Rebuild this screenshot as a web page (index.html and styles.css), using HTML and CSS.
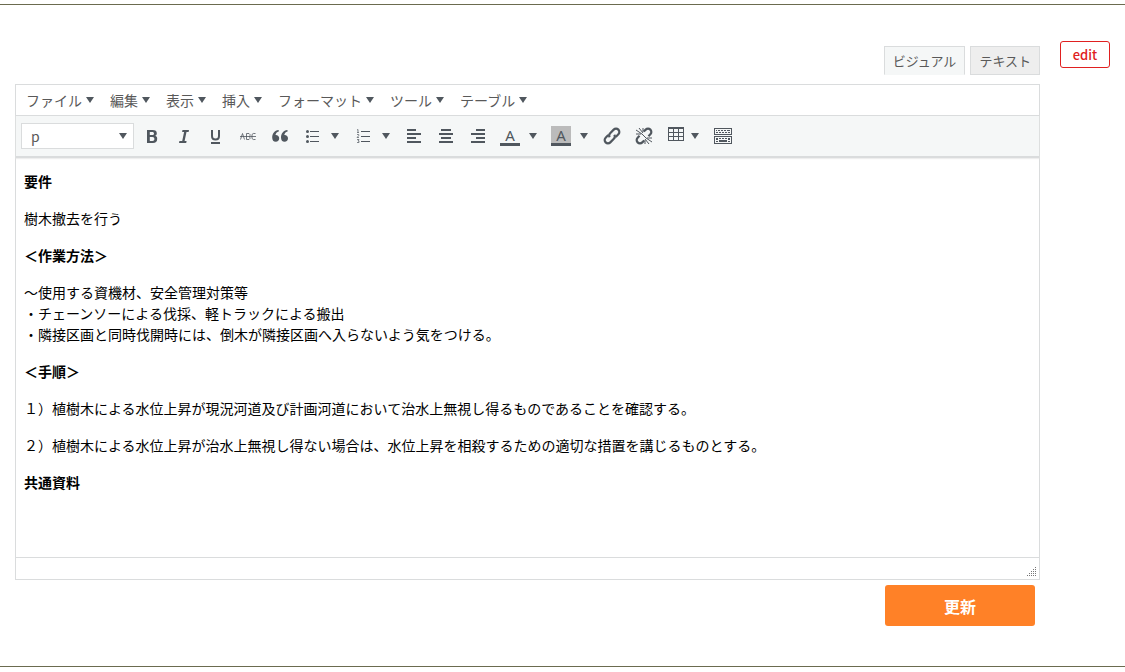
FILE: index.html
```html
<!DOCTYPE html>
<html lang="ja">
<head>
<meta charset="utf-8">
<meta name="viewport" content="width=device-width, initial-scale=1">
<title>エディター</title>
<link rel="stylesheet" href="styles.css">
</head>
<body>
<svg class="sprite" aria-hidden="true">
  <symbol id="caret" viewBox="0 0 8 6"><path d="M0 0h8L4 6z"/></symbol>
</svg>
<main class="section">
  <form class="editor-column">
    <div class="tabs">
      <button type="button" class="tab tab-active">ビジュアル</button>
      <button type="button" class="tab">テキスト</button>
    </div>
    <div class="editor">
      <div class="menubar">
        <button type="button" class="menu">ファイル<svg class="caret"><use href="#caret"/></svg></button>
        <button type="button" class="menu">編集<svg class="caret"><use href="#caret"/></svg></button>
        <button type="button" class="menu">表示<svg class="caret"><use href="#caret"/></svg></button>
        <button type="button" class="menu">挿入<svg class="caret"><use href="#caret"/></svg></button>
        <button type="button" class="menu">フォーマット<svg class="caret"><use href="#caret"/></svg></button>
        <button type="button" class="menu">ツール<svg class="caret"><use href="#caret"/></svg></button>
        <button type="button" class="menu">テーブル<svg class="caret"><use href="#caret"/></svg></button>
      </div>
      <div class="toolbar">
        <div class="format">
          <select class="format-select" aria-label="フォーマット"><option>p</option></select>
          <svg class="caret format-caret"><use href="#caret"/></svg>
        </div>
        <button type="button" class="tool" aria-label="太字"><svg class="icon" viewBox="0 0 20 20"><path fill-rule="evenodd" d="M5 4h5.500c3 0 4.300 1.200 4.300 3.200 0 1.300-.6 2.200-1.700 2.600 1.400.4 2.100 1.400 2.100 2.900C15.200 15.700 13.600 17 11 17H5zm2.800 2v3H10c1.300 0 2-.5 2-1.500S11.300 6 10 6zm0 5v4h2.600c1.300 0 2-.8 2-2s-.7-2-2-2z"/></svg></button>
        <button type="button" class="tool" aria-label="斜体"><svg class="icon" viewBox="0 0 20 20"><path d="M8.500 4H15l-.4 2h-2.100l-1.900 9h2l-.4 2H5l.4-2h2.800l1.900-9H8.100z"/></svg></button>
        <button type="button" class="tool" aria-label="下線"><svg class="icon" viewBox="0 0 20 20"><path class="line" stroke-width="2" d="M6 4v6c0 2.500 1 3.500 3.500 3.500S13 12.500 13 10V4"/><path d="M5 16h9v2H5z"/></svg></button>
        <button type="button" class="tool" aria-label="打ち消し線"><svg class="icon" viewBox="0 0 20 20"><path class="line" stroke-width="0.8" d="M2.500 13.500l2-6 2 6M8.500 7.500v6H11l1-1v-1.200l-1-.8 1-1V8.500l-1-1zM17.500 7.500h-2.200l-1.300 1v4l1.300 1h2.200M2 10.500h16"/></svg></button>
        <button type="button" class="tool" aria-label="引用"><svg class="icon" viewBox="0 0 20 20"><path d="M9 5.200C6.700 6 5.700 7.400 5.500 9c2-.2 3.700 1.100 3.700 3.200 0 2-1.400 3.600-3.400 3.600-2.300 0-3.600-1.700-3.600-4.400C2.200 7.700 4.600 4.500 8.500 4zM17.800 5.200c-2.300.8-3.300 2.200-3.500 3.800 2-.2 3.700 1.100 3.700 3.200 0 2-1.400 3.600-3.400 3.600-2.300 0-3.600-1.700-3.600-4.400 0-3.700 2.400-6.900 6.300-7.400z"/></svg></button>
        <button type="button" class="tool split" aria-label="箇条書き"><svg class="icon" viewBox="0 0 20 20"><circle cx="5.500" cy="5.500" r="1.500"/><circle cx="5.500" cy="10.500" r="1.500"/><circle cx="5.500" cy="15.500" r="1.500"/><path d="M8 5h9v1H8zM8 10h9v1H8zM8 15h9v1H8z"/></svg><svg class="caret"><use href="#caret"/></svg></button>
        <button type="button" class="tool split" aria-label="番号付きリスト"><svg class="icon" viewBox="0 0 20 20"><path d="M8 5h9v1H8zM8 10h9v1H8zM8 15h9v1H8z"/><path class="line thin" d="M4 4l1-.5v3M4 6.500h2M4 8.500h1.700v1.200L4 11.500h2M4 13.500h2l-1 1.400h1v1.600H4"/></svg><svg class="caret"><use href="#caret"/></svg></button>
        <button type="button" class="tool" aria-label="左揃え"><svg class="icon" viewBox="0 0 20 20"><path d="M3 3h9v2H3zM3 7h14v2H3zM3 11h9v2H3zM3 15h14v2H3z"/></svg></button>
        <button type="button" class="tool" aria-label="中央揃え"><svg class="icon" viewBox="0 0 20 20"><path d="M5 3h10v2H5zM3 7h14v2H3zM5 11h10v2H5zM3 15h14v2H3z"/></svg></button>
        <button type="button" class="tool" aria-label="右揃え"><svg class="icon" viewBox="0 0 20 20"><path d="M8 3h9v2H8zM3 7h14v2H3zM8 11h9v2H8zM3 15h14v2H3z"/></svg></button>
        <button type="button" class="tool split" aria-label="文字色"><span class="letter">A</span><svg class="caret"><use href="#caret"/></svg></button>
        <button type="button" class="tool split" aria-label="背景色"><span class="letter letter-filled">A</span><svg class="caret"><use href="#caret"/></svg></button>
        <button type="button" class="tool" aria-label="リンク"><svg class="icon" viewBox="0 0 20 20"><g class="line" stroke-width="2.200" transform="rotate(-45 10 10)"><path d="M8 6.700H4.300a3.300 3.300 0 0 0 0 6.600h5a3.300 3.300 0 0 0 3.200-2.500"/><path d="M12 13.300h3.700a3.300 3.300 0 0 0 0-6.600h-5a3.300 3.300 0 0 0-3.200 2.500"/></g></svg></button>
        <button type="button" class="tool" aria-label="リンク解除"><svg class="icon" viewBox="0 0 20 20"><g class="line" stroke-width="2.200" transform="rotate(-45 10 10)"><path d="M7 6.700H4.300a3.300 3.300 0 0 0 0 6.600H7M13 13.300h2.700a3.300 3.300 0 0 0 0-6.600H13"/></g><path class="line" d="M2 4l6 4M5 2l4 5M9 2v4M2 8h5M18 16l-6-4M15 18l-4-5M11 18v-4M18 12h-5M8 8l4 4"/></svg></button>
        <button type="button" class="tool split split-narrow" aria-label="表"><svg class="icon" viewBox="0 0 20 20"><path fill-rule="evenodd" d="M2 1h16v14H2zm1 2v3h4V3zm5 0v3h4V3zm5 0v3h4V3zM3 7v3h4V7zm5 0v3h4V7zm5 0v3h4V7zM3 11v3h4v-3zm5 0v3h4v-3zm5 0v3h4v-3z"/></svg><svg class="caret"><use href="#caret"/></svg></button>
        <button type="button" class="tool" aria-label="ツールバー切り替え"><svg class="icon" viewBox="0 0 20 20"><path fill-rule="evenodd" d="M1 2h18v7H1zm1 1v5h16V3zM1 10h18v8H1zm1 1v6h16v-6z"/><path d="M3 4h1v1H3zM5 4h2v1H5zM8 4h2v1H8zM11 4h2v1h-2zM14 4h3v1h-3zM3 6h2v1H3zM6 6h2v1H6zM9 6h2v1H9zM12 6h2v1h-2zM15 6h2v1h-2zM3 12h2v2H3zM6 12h2v1H6zM9 12h2v1H9zM12 12h2v1h-2zM15 12h2v2h-2zM3 15h2v1H3zM6 14h8v2H6zM15 15h2v1h-2z"/></svg></button>
      </div>
      <div class="content" contenteditable="true" role="textbox" aria-multiline="true" aria-label="本文">
        <p><strong>要件</strong></p>
        <p>樹木撤去を行う</p>
        <p><strong>＜作業方法＞</strong></p>
        <p>～使用する資機材、安全管理対策等<br>・チェーンソーによる伐採、軽トラックによる搬出<br>・隣接区画と同時伐開時には、倒木が隣接区画へ入らないよう気をつける。</p>
        <p><strong>＜手順＞</strong></p>
        <p>１）植樹木による水位上昇が現況河道及び計画河道において治水上無視し得るものであることを確認する。</p>
        <p>２）植樹木による水位上昇が治水上無視し得ない場合は、水位上昇を相殺するための適切な措置を講じるものとする。</p>
        <p><strong>共通資料</strong></p>
      </div>
      <div class="statusbar">
        <svg class="grip" viewBox="0 0 10 10"><path d="M8 0h1v1H8zM6 2h1v1H6zM8 2h1v1H8zM4 4h1v1H4zM6 4h1v1H6zM8 4h1v1H8zM2 6h1v1H2zM4 6h1v1H4zM6 6h1v1H6zM8 6h1v1H8zM0 8h1v1H0zM2 8h1v1H2zM4 8h1v1H4zM6 8h1v1H6zM8 8h1v1H8z"/></svg>
      </div>
    </div>
    <button type="submit" class="submit">更新</button>
  </form>
  <button type="button" class="edit">edit</button>
</main>
</body>
</html>
```
FILE: styles.css
```css
* {
  box-sizing: border-box;
}

body {
  margin: 4px 0 0;
  background: #fff;
  color: #595959;
  font: 14px/20px "Noto Sans CJK JP", sans-serif;
}

button,
select {
  margin: 0;
  border: 0;
  background: none;
  color: inherit;
  font: inherit;
  cursor: pointer;
}

.sprite {
  position: absolute;
  width: 0;
  height: 0;
}

.section {
  display: flex;
  align-items: flex-start;
  gap: 20px;
  padding: 36px 15px 40px;
  border-top: 1px solid #6b6b4f;
  border-bottom: 1px solid #6b6b4f;
}

.editor-column {
  display: flex;
  flex: 1;
  flex-direction: column;
  min-width: 0;
  padding-top: 5px;
}

.tabs {
  display: flex;
  justify-content: flex-end;
  gap: 5px;
  margin-bottom: 9px;
}

.tab {
  height: 29px;
  padding: 0 8px;
  border: 1px solid #dadcdd;
  background: #eee;
  font-size: 13px;
}

.tab-active {
  border-bottom-color: #f5f7f7;
  background: #f5f7f7;
}

.editor {
  border: 1px solid #dadcdd;
}

.menubar {
  display: flex;
  flex-wrap: wrap;
  padding: 0 2px;
}

.menu {
  display: flex;
  align-items: center;
  gap: 4px;
  height: 30px;
  padding: 0 8px;
}

.caret {
  flex: none;
  width: 8px;
  height: 6px;
  fill: #50575e;
}

.toolbar {
  display: flex;
  flex-wrap: wrap;
  align-items: center;
  padding: 4px 5px;
  border-top: 1px solid #dadcdd;
  border-bottom: 2px solid #dadcdd;
  background: #f5f7f7;
  box-shadow: 0 1px 1px #eee;
}

.format {
  position: relative;
  width: 113px;
  margin-right: 2px;
}

.format-select {
  display: block;
  width: 100%;
  height: 26px;
  padding: 0 24px 0 9px;
  border: 1px solid #dadcdd;
  background: #fff;
  appearance: none;
}

.format-caret {
  position: absolute;
  top: 10px;
  right: 7px;
  pointer-events: none;
}

.tool {
  display: flex;
  align-items: center;
  gap: 9px;
  width: 32px;
  height: 32px;
  padding: 0 6px;
}

.split {
  width: 51px;
}

.split-narrow {
  gap: 5px;
  width: 47px;
}

.icon {
  flex: none;
  width: 20px;
  height: 20px;
  fill: #50575e;
}

.line {
  fill: none;
  stroke: #50575e;
}

.thin {
  stroke-width: 0.7;
}

.letter {
  flex: none;
  width: 20px;
  height: 20px;
  border-bottom: 3px solid #50575e;
  color: #50575e;
  font-family: "Noto Sans", sans-serif;
  font-size: 15px;
  line-height: 18px;
  text-align: center;
}

.letter-filled {
  background: #bbb;
}

.content {
  min-height: 399px;
  padding: 13px 8px;
  color: #000;
  line-height: 21px;
}

.content p {
  margin: 0 0 16px;
}

.statusbar {
  display: flex;
  align-items: flex-end;
  justify-content: flex-end;
  height: 22px;
  padding: 2px;
  border-top: 1px solid #dadcdd;
}

.grip {
  width: 10px;
  height: 10px;
  fill: #777;
}

.submit {
  align-self: flex-end;
  width: 150px;
  height: 41px;
  margin: 5px 5px 0 0;
  border-radius: 3px;
  background: #ff8127;
  color: #fff;
  font-size: 16px;
  font-weight: 700;
}

.edit {
  width: 50px;
  height: 27px;
  padding: 0;
  border: 1px solid #e02020;
  border-radius: 3px;
  color: #e02020;
  font-size: 13px;
  font-weight: 500;
}
```
